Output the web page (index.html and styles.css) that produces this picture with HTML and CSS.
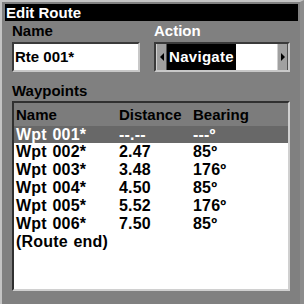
FILE: index.html
```html
<!DOCTYPE html>
<html lang="en">
<head>
    <meta charset="UTF-8">
    <meta name="viewport" content="width=device-width, initial-scale=1.0">
    <title>Edit Route</title>
    <link rel="stylesheet" href="styles.css">
</head>
<body>
    <div class="screen">
        <div class="title">Edit Route</div>

        <div class="fields">
            <div class="field">
                <div class="label">Name</div>
                <div class="text-box">Rte 001*</div>
            </div>
            <div class="field">
                <div class="label label-light">Action</div>
                <div class="spinner">
                    <span class="arrow left"></span>
                    <span class="spin-value"><span class="selected">Navigate</span></span>
                    <span class="arrow right"></span>
                </div>
            </div>
        </div>

        <div class="label section">Waypoints</div>
        <div class="list">
            <div class="row head">
                <span>Name</span><span>Distance</span><span>Bearing</span>
            </div>
            <div class="row current">
                <span>Wpt 001*</span><span>--.--</span><span>---º</span>
            </div>
            <div class="row"><span>Wpt 002*</span><span>2.47</span><span>85º</span></div>
            <div class="row"><span>Wpt 003*</span><span>3.48</span><span>176º</span></div>
            <div class="row"><span>Wpt 004*</span><span>4.50</span><span>85º</span></div>
            <div class="row"><span>Wpt 005*</span><span>5.52</span><span>176º</span></div>
            <div class="row"><span>Wpt 006*</span><span>7.50</span><span>85º</span></div>
            <div class="row"><span>(Route end)</span></div>
        </div>
    </div>
</body>
</html>
```

FILE: styles.css
```css
* {
    margin: 0;
    padding: 0;
    box-sizing: border-box;
}

body {
    background: #808080;
    font-family: 'Liberation Sans', Arial, sans-serif;
    font-weight: bold;
    font-size: 14px;
    color: #000;
}

.screen {
    width: 304px;
    height: 304px;
    border-top: 2px solid #c4c4c4;
    border-left: 2px solid #c4c4c4;
    border-right: 4px solid #8c8c8c;
    padding: 2px 2px 0 3px;
    background: #808080;
}

.title {
    background: #000;
    color: #fff;
    height: 17px;
    line-height: 17px;
    padding-left: 1px;
    font-size: 15px;
}

.fields {
    display: grid;
    grid-template-columns: 128px 136px;
    gap: 14px;
    padding-left: 7px;
}

.label {
    height: 20px;
    line-height: 19px;
    padding-left: 7px;
    font-size: 15px;
}

.fields .label {
    padding-left: 0;
    height: 21px;
}

.label.section {
    margin-top: 9px;
}

.label-light {
    color: #fff;
}

.text-box {
    height: 30px;
    background: #fff;
    border: 2px solid;
    border-color: #3a3a3a #c8c8c8 #c8c8c8 #3a3a3a;
    line-height: 26px;
    padding-left: 1px;
    font-size: 15px;
}

.spinner {
    display: flex;
    height: 30px;
    background: #fff;
    border: 2px solid;
    border-color: #3a3a3a #c8c8c8 #c8c8c8 #3a3a3a;
}

.arrow {
    width: 11px;
    background: #a0a0a0;
    border-left: 1px solid #d0d0d0;
    border-right: 1px solid #505050;
    display: flex;
    align-items: center;
    justify-content: center;
}

.arrow::before {
    content: "";
    border-top: 4px solid transparent;
    border-bottom: 4px solid transparent;
}

.arrow.left::before {
    border-right: 4px solid #000;
}

.arrow.right::before {
    border-left: 4px solid #000;
}

.spin-value {
    flex: 1;
    display: flex;
}

.selected {
    background: #000;
    color: #fff;
    line-height: 26px;
    padding: 0 2px 0 2px;
    font-size: 15px;
    letter-spacing: 0.3px;
}

.list {
    margin-left: 7px;
    width: 278px;
    height: 190px;
    background: #fff;
    border: 2px solid;
    border-color: #303030 #d0d0d0 #d0d0d0 #303030;
}

.row {
    display: grid;
    grid-template-columns: 103px 74px 1fr;
    height: 18px;
    line-height: 18px;
    padding-left: 2px;
    font-size: 16px;
    letter-spacing: 0.2px;
    word-spacing: 1px;
}

.row.head {
    background: #7c7c7c;
    height: 23px;
    line-height: 24px;
    font-size: 15px;
    letter-spacing: 0;
    word-spacing: 0;
}

.row.current {
    background: #686868;
    color: #fff;
    height: 17px;
    line-height: 17px;
}
```
